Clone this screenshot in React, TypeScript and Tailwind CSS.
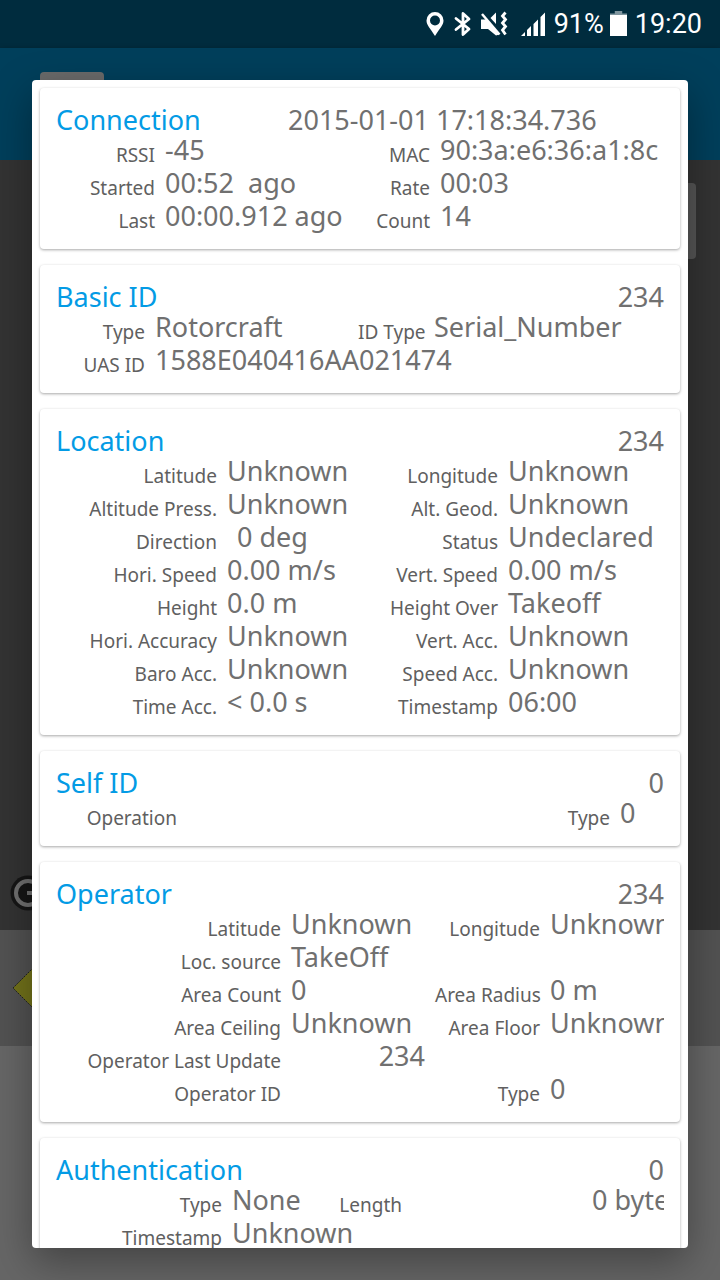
import type { ReactNode } from "react";

type Field = { label: string; value: string; className?: string };

function Card({
  title,
  meta,
  columns,
  fields,
  metaClass = "ml-auto",
  titleClass = "",
}: {
  title: string;
  meta: string;
  columns: string;
  fields: Field[];
  metaClass?: string;
  titleClass?: string;
}) {
  return (
    <section className="rounded-sm bg-white px-4 pb-[15px] pt-[17px] shadow-[0_1px_3px_rgba(0,0,0,0.35)]">
      <header className="flex text-[27px] leading-[30px]">
        <h2 className={`shrink-0 text-[#039be5] ${titleClass}`}>{title}</h2>
        <span className={`whitespace-nowrap ${metaClass}`}>{meta}</span>
      </header>
      <dl className={`grid auto-rows-[33px] gap-x-[10px] overflow-x-clip whitespace-nowrap ${columns}`}>
        {fields.map((f, i) => (
          <Pair key={i} {...f} />
        ))}
      </dl>
    </section>
  );
}

function Pair({ label, value, className = "" }: Field): ReactNode {
  return (
    <>
      <dt className="pt-[5px] text-right text-[19px] leading-[30px] text-[#606060]">{label}</dt>
      <dd className={`min-w-0 whitespace-pre text-[27px] leading-[30px] ${className}`}>{value}</dd>
    </>
  );
}

const connection: Field[] = [
  { label: "RSSI", value: "-45" },
  { label: "MAC", value: "90:3a:e6:36:a1:8c" },
  { label: "Started", value: "00:52  ago" },
  { label: "Rate", value: "00:03" },
  { label: "Last", value: "00:00.912 ago" },
  { label: "Count", value: "14" },
];

const basicId: Field[] = [
  { label: "Type", value: "Rotorcraft" },
  { label: "ID Type", value: "Serial_Number" },
  { label: "UAS ID", value: "1588E040416AA021474", className: "col-span-3" },
];

const location: Field[] = [
  { label: "Latitude", value: "Unknown" },
  { label: "Longitude", value: "Unknown" },
  { label: "Altitude Press.", value: "Unknown" },
  { label: "Alt. Geod.", value: "Unknown" },
  { label: "Direction", value: "0 deg", className: "pl-[10px]" },
  { label: "Status", value: "Undeclared" },
  { label: "Hori. Speed", value: "0.00 m/s" },
  { label: "Vert. Speed", value: "0.00 m/s" },
  { label: "Height", value: "0.0 m" },
  { label: "Height Over", value: "Takeoff" },
  { label: "Hori. Accuracy", value: "Unknown" },
  { label: "Vert. Acc.", value: "Unknown" },
  { label: "Baro Acc.", value: "Unknown" },
  { label: "Speed Acc.", value: "Unknown" },
  { label: "Time Acc.", value: "< 0.0 s" },
  { label: "Timestamp", value: "06:00" },
];

const selfId: Field[] = [
  { label: "Operation", value: "" },
  { label: "Type", value: "0" },
];

const operator: Field[] = [
  { label: "Latitude", value: "Unknown" },
  { label: "Longitude", value: "Unknown" },
  { label: "Loc. source", value: "TakeOff", className: "col-span-3" },
  { label: "Area Count", value: "0" },
  { label: "Area Radius", value: "0 m" },
  { label: "Area Ceiling", value: "Unknown" },
  { label: "Area Floor", value: "Unknown" },
  { label: "Operator Last Update", value: "234", className: "text-right" },
  { label: "", value: "" },
  { label: "Operator ID", value: "" },
  { label: "Type", value: "0" },
];

const authentication: Field[] = [
  { label: "Type", value: "None" },
  { label: "Length", value: "0 bytes", className: "pl-[180px]" },
  { label: "Timestamp", value: "Unknown", className: "col-span-3" },
];

function StatusBar() {
  return (
    <div className="flex h-12 items-center justify-end bg-[#002c3e] pr-[18px] font-[Roboto,sans-serif] text-[27px] text-white">
      <svg width="18" height="26" viewBox="0 0 18 26" className="mr-[10px]" fill="#fff" aria-hidden="true">
        <path fillRule="evenodd" d="M9 1a8.500 8.500 0 0 0-8.500 8.500C.5 14 4 17 9 25c5-8 8.500-11 8.500-15.500A8.500 8.500 0 0 0 9 1Zm0 3.500a5 5 0 1 1 0 10 5 5 0 0 1 0-10Z" />
      </svg>
      <svg width="18" height="26" viewBox="0 0 18 26" className="mr-2" fill="none" stroke="#fff" strokeWidth="2.800" aria-hidden="true">
        <path d="M2 7.500 15 18 9 23.500V2.500L15 8 2 18.500" strokeLinejoin="round" strokeLinecap="round" />
      </svg>
      <svg width="28" height="26" viewBox="0 0 28 26" className="mr-3" aria-hidden="true">
        <path d="M1 8.500h5.500L19 23.500l-3 1-8-6.500H1Z" fill="#fff" />
        <path d="m10.500 7 5.500-5.500V13Z" fill="#fff" />
        <path d="M2 3 19.500 23.500" stroke="#fff" strokeWidth="2.500" />
        <path d="m25.500 1.500-3 3.500 3 3.500-3 3.500 3 3.500-3 3.500 3 4.500" fill="none" stroke="#fff" strokeWidth="2.800" />
      </svg>
      <svg width="26" height="26" viewBox="0 0 26 26" className="mr-2" fill="#fff" aria-hidden="true">
        <path d="M1 25h4v-4ZM7 25h4V15l-4 4ZM13.500 25H18V8.500l-4.500 4.500ZM20.500 25H25V1.500l-4.500 4.500Z" />
      </svg>
      <span>91%</span>
      <svg width="17" height="26" viewBox="0 0 16 26" className="ml-[6px] mr-2" preserveAspectRatio="none" aria-hidden="true">
        <path d="M4.500 0h7v2.500H16V5H0V2.500h4.500Z" fill="#7f959e" />
        <path d="M0 4h16v21H0Z" fill="#fff" />
      </svg>
      <span>19:20</span>
    </div>
  );
}

export default function App() {
  return (
    <div className="relative flex h-screen flex-col overflow-hidden bg-[#666666] font-['Noto_Sans',sans-serif] text-[#707070]">
      <StatusBar />
      <div className="flex h-28 shrink-0 items-start bg-[#003f5b] pl-10 pt-6 shadow-[0_2px_6px_rgba(0,0,0,0.4)]">
        <div className="h-12 w-16 rounded bg-[#6a6a6a]" />
      </div>
      <div className="flex h-[770px] shrink-0 flex-col justify-between bg-[#333333]">
        <div className="mr-6 mt-[23px] h-[76px] w-16 self-end rounded bg-[#565656]" />
        <svg width="72" height="36" viewBox="0 0 72 36" className="mb-[19px] ml-[10px]" aria-hidden="true">
          <circle cx="18" cy="18" r="17.500" fill="#161616" />
          <circle cx="18" cy="18" r="12" fill="none" stroke="#707070" strokeWidth="4" />
          <path d="M17 18h13" fill="none" stroke="#707070" strokeWidth="4" />
        </svg>
      </div>
      <div className="flex h-[116px] shrink-0 items-center bg-[#525252] pl-3">
        <svg width="40" height="40" viewBox="0 0 40 40" aria-hidden="true">
          <path d="M1 20 20 1l19 19-19 19Z" fill="#72721a" stroke="#222" strokeDasharray="2 1" />
        </svg>
      </div>

      <div
        role="dialog"
        aria-label="Aircraft details"
        className="absolute inset-x-8 bottom-8 top-20 overflow-hidden rounded bg-white shadow-[0_14px_40px_rgba(0,0,0,0.35)]"
      >
        <div className="flex flex-col gap-4 p-2">
          <Card
            title="Connection"
            meta="2015-01-01 17:18:34.736"
            titleClass="w-[232px]"
            metaClass=""
            columns="grid-cols-[99px_191px_64px_minmax(0,1fr)]"
            fields={connection}
          />
          <Card title="Basic ID" meta="234" columns="grid-cols-[89px_193px_66px_minmax(0,1fr)]" fields={basicId} />
          <Card title="Location" meta="234" columns="grid-cols-[161px_153px_108px_minmax(0,1fr)]" fields={location} />
          <Card title="Self ID" meta="0" columns="grid-cols-[121px_minmax(0,1fr)_44px_44px]" fields={selfId} />
          <Card title="Operator" meta="234" columns="grid-cols-[225px_134px_105px_minmax(0,1fr)]" fields={operator} />
          <Card title="Authentication" meta="0" columns="grid-cols-[166px_96px_64px_minmax(0,1fr)]" fields={authentication} />
        </div>
      </div>
    </div>
  );
}
